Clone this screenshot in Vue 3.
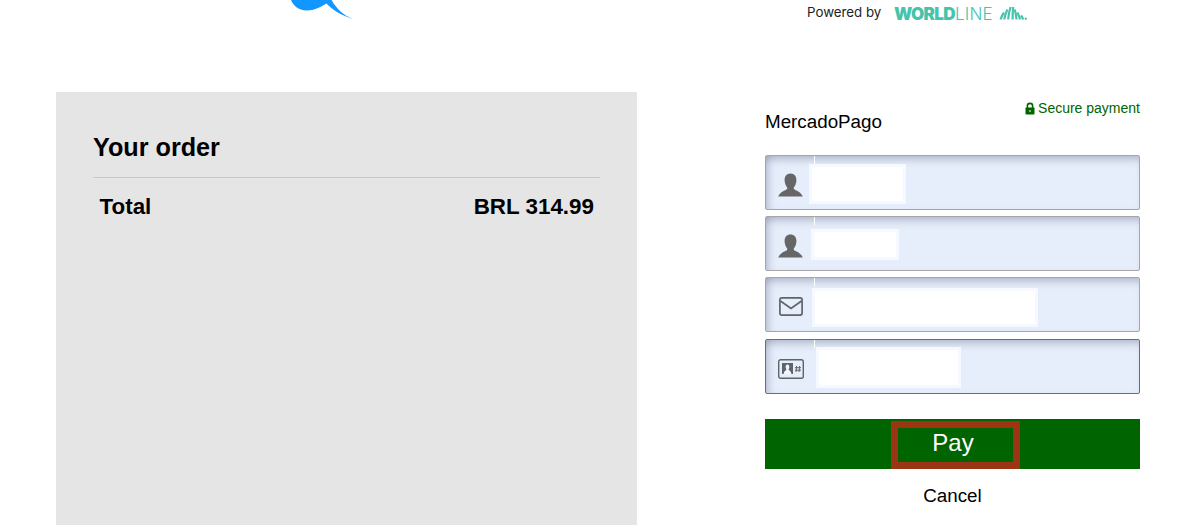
<script setup>
const fields = [
  { icon: 'person', left: 43, width: 97, top: 8, height: 40 },
  { icon: 'person', left: 45, width: 88, top: 12, height: 31 },
  { icon: 'mail', left: 46, width: 226, top: 10, height: 39 },
  { icon: 'id', left: 50, width: 145, top: 7, height: 41, active: true }
]
const patchStyle = (f) => ({
  left: f.left + 'px',
  top: f.top + 'px',
  width: f.width + 'px',
  height: f.height + 'px'
})
</script>

<template>
  <div class="page">
    <header class="top">
      <div class="logo-slot">
        <svg width="64" height="20" viewBox="0 0 64 20">
          <path fill="#1296ff" d="M1 0 C3 5 8 10.5 17 10.5 C24 10.5 31 7 36.5 3.5 C41 9 52 16 63.5 19 C53 15.5 46 8 41.5 0 Z" />
        </svg>
      </div>
      <div class="powered">
        <span class="powered-text">Powered by</span>
        <span class="wl"><b>WORLD</b>LINE</span>
        <svg class="wl-mark" width="28" height="14" viewBox="0 0 28 14" fill="none" stroke="#46c4ab" stroke-width="2.2">
          <path d="M1.5 13.5 C2.5 10.5 3.6 8.5 5 6.5" />
          <path d="M5.2 13.5 C5.8 10 7 6.5 8.4 3.5" />
          <path d="M9.2 13.5 C9.5 9 10.2 5 11.6 1" />
          <path d="M13.6 13.5 C13.6 9 13.8 5 14.2 1" />
          <path d="M17.5 13.5 C17.2 10 16.6 6.5 15.8 3.5" />
          <path d="M21 13.5 C20.4 11 19.4 8.6 18.4 6.5" />
          <path d="M24.2 13.5 C23.6 12 22.8 10.6 22 9.5" />
          <path d="M27.2 13.5 C27 13 26.6 12.4 26.2 12" />
        </svg>
      </div>
    </header>

    <main class="content">
      <section class="order">
        <h2 class="order-title">Your order</h2>
        <div class="order-row">
          <span>Total</span>
          <span>BRL 314.99</span>
        </div>
      </section>

      <section class="pay">
        <div class="head">
          <div class="method">MercadoPago</div>
          <div class="secure">
            <svg width="10" height="13" viewBox="0 0 10 13">
              <path fill="none" stroke="#006400" stroke-width="1.6" d="M2.4 6 V3.8 C2.4 0.6 7.6 0.6 7.6 3.8 V6" />
              <rect x="0.5" y="5.5" width="9" height="7" rx="0.8" fill="#006400" />
              <circle cx="5" cy="9" r="1.1" fill="#9fc79f" />
            </svg>
            <span>Secure payment</span>
          </div>
        </div>

        <div class="fields">
          <div v-for="(f, i) in fields" :key="i" class="field" :class="{ active: f.active }">
            <div class="icon-cell">
              <svg v-if="f.icon === 'person'" class="person-icon" width="25" height="24" viewBox="0 0 25 24" fill="#666">
                <path d="M12.5 0.5 C16.5 0.5 18.6 3.4 18.4 7.4 C18.2 10.4 17 13 15.8 14.6 V16 C17.8 17.6 22.6 18.4 24.8 23.5 H0.2 C2.4 18.4 7.2 17.6 9.2 16 V14.6 C8 13 6.8 10.4 6.6 7.4 C6.4 3.4 8.5 0.5 12.5 0.5 Z" />
              </svg>
              <svg v-else-if="f.icon === 'mail'" width="24" height="19" viewBox="0 0 24 19" fill="none" stroke="#5f6468" stroke-width="1.7">
                <rect x="0.9" y="0.9" width="22.2" height="17.2" rx="2" />
                <path d="M1.5 4 L12 11.5 L22.5 4" />
              </svg>
              <svg v-else class="id-icon" width="26" height="20" viewBox="0 0 26 20">
                <rect x="0.7" y="0.7" width="24.6" height="18.6" rx="2" fill="none" stroke="#5f6468" stroke-width="1.4" />
                <rect x="4" y="4" width="11" height="11" fill="#5f6468" />
                <path fill="#f2f5fc" d="M9.5 5.5 C11.1 5.5 11.5 7 11.3 8.4 C11.1 9.4 10.8 10 10.5 10.6 C11.1 11.6 12.9 12 13.5 15 H5.5 C6.1 12 7.9 11.6 8.5 10.6 C8.2 10 7.9 9.4 7.7 8.4 C7.5 7 7.9 5.5 9.5 5.5 Z" />
                <path fill="none" stroke="#5f6468" stroke-width="1" d="M18.6 7 L18 13 M21.6 7 L21 13 M17 8.7 H23 M17 11.2 H23" />
              </svg>
            </div>
            <div class="divider-tick"></div>
            <div class="patch" :style="patchStyle(f)"></div>
          </div>
        </div>

        <button class="pay-btn" type="button"><span class="pay-label">Pay</span></button>
        <div class="cancel">Cancel</div>
      </section>
    </main>
  </div>
</template>

<style>
html, body { margin: 0; background: #fff; overflow: hidden; }
</style>

<style scoped>
.page {
  width: 1198px;
  height: 525px;
  overflow: hidden;
  font-family: "Liberation Sans", Arial, sans-serif;
  color: #000;
  background: #fff;
}
.top {
  height: 92px;
  display: flex;
  align-items: flex-start;
}
.logo-slot { margin-left: 290px; height: 20px; line-height: 0; }
.powered {
  margin-left: 453px;
  margin-top: 3px;
  display: flex;
  align-items: center;
  height: 18px;
  flex: none;
}
.powered-text { font-family: Inter, "Liberation Sans", sans-serif; font-size: 13.3px; color: #222; width: 87px; white-space: nowrap; }
.wl {
  font-family: Inter, "Liberation Sans", sans-serif;
  font-size: 17px;
  color: #46c4ab;
  letter-spacing: 0.2px;
  font-weight: 300;
  width: 105px;
  white-space: nowrap;
  margin-top: 3px;
}
.wl b { font-weight: 900; letter-spacing: -0.6px; }
.wl-mark { margin-top: 2px; }
.content { display: flex; align-items: flex-start; }
.order {
  margin-left: 56px;
  width: 581px;
  height: 433px;
  background: #e5e5e5;
  padding: 39px 37px 0;
  box-sizing: border-box;
}
.order-title {
  margin: 0;
  font-size: 25.2px;
  line-height: 32px;
  font-weight: 700;
  padding-bottom: 14px;
  border-bottom: 1px solid #c9c9c9;
}
.order-row {
  display: flex;
  justify-content: space-between;
  padding: 14px 6px 0 6.5px;
  font-size: 22.4px;
  line-height: 30px;
  font-weight: 700;
}
.pay { margin-left: 128px; width: 375px; padding-top: 8px; }
.head { display: flex; justify-content: space-between; align-items: flex-start; }
.secure {
  display: flex;
  align-items: center;
  gap: 3px;
  color: #006400;
  font-size: 14px;
  line-height: 16px;
}
.method { font-size: 18.8px; line-height: 22px; margin-top: 11px; }
.fields { margin-top: 22px; display: flex; flex-direction: column; gap: 6px; }
.field {
  height: 55px;
  box-sizing: border-box;
  display: flex;
  align-items: flex-start;
  position: relative;
  background: #e6eefb;
  border: 1px solid #a6a6aa;
  border-radius: 2px;
  box-shadow: inset 0 8px 8px -5px rgba(90, 100, 130, 0.4), inset 8px 0 8px -6px rgba(90, 100, 130, 0.35);
}
.field + .field.active { margin-top: 1px; }
.field.active { border-color: #6b6e74; }
.icon-cell {
  width: 50px;
  height: 53px;
  display: flex;
  align-items: center;
  justify-content: center;
  flex: none;
  padding-top: 4px;
  box-sizing: border-box;
}
.person-icon { margin-right: 2px; }
.id-icon { margin-right: 1px; }
.divider-tick {
  position: absolute;
  left: 48px;
  top: 0;
  width: 1px;
  height: 8px;
  background: #fff;
}
.patch {
  position: absolute;
  background: #fff;
  box-shadow: inset 0 0 0 3px #f6f9ff;
}
.pay-btn {
  display: flex;
  justify-content: center;
  width: 375px;
  height: 50px;
  margin-top: 25px;
  padding: 2px 0 0;
  background: #006400;
  border: none;
  font: inherit;
  cursor: pointer;
}
.pay-label {
  width: 129px;
  height: 48px;
  box-sizing: border-box;
  margin-left: 6px;
  padding-right: 5px;
  border: 7px solid #9c3516;
  color: #fff;
  font-size: 24px;
  line-height: 29px;
  text-align: center;
}
.cancel { text-align: center; font-size: 18.8px; line-height: 22px; margin-top: 16px; }
</style>
